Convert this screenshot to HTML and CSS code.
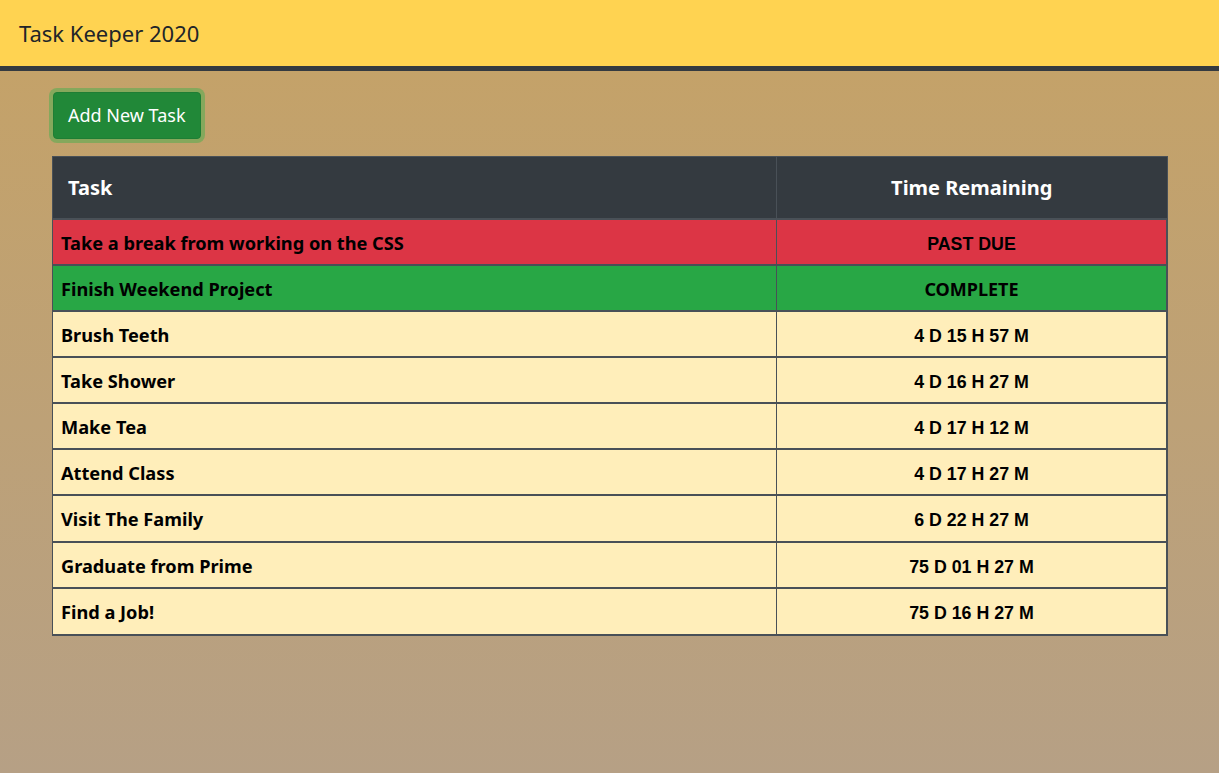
FILE: index.html
```html
<!DOCTYPE html>
<html lang="en">
<head>
<meta charset="utf-8">
<title>Task Keeper 2020</title>
<link rel="stylesheet" href="styles.css">
</head>
<body>
<header class="topbar">
  <h1 class="brand">Task Keeper 2020</h1>
</header>
<main class="content">
  <button class="btn-add" type="button">Add New Task</button>
  <table class="tasks">
    <thead>
      <tr><th class="col-task">Task</th><th class="col-time">Time Remaining</th></tr>
    </thead>
    <tbody>
      <tr class="past"><td>Take a break from working on the CSS</td><td class="time">PAST DUE</td></tr>
      <tr class="done"><td>Finish Weekend Project</td><td class="time">COMPLETE</td></tr>
      <tr><td>Brush Teeth</td><td class="time">4 D 15 H 57 M</td></tr>
      <tr><td>Take Shower</td><td class="time">4 D 16 H 27 M</td></tr>
      <tr><td>Make Tea</td><td class="time">4 D 17 H 12 M</td></tr>
      <tr><td>Attend Class</td><td class="time">4 D 17 H 27 M</td></tr>
      <tr class="tall"><td>Visit The Family</td><td class="time">6 D 22 H 27 M</td></tr>
      <tr><td>Graduate from Prime</td><td class="time">75 D 01 H 27 M</td></tr>
      <tr class="tall"><td>Find a Job!</td><td class="time">75 D 16 H 27 M</td></tr>
    </tbody>
  </table>
</main>
</body>
</html>
```

FILE: styles.css
```css
html, body {
  margin: 0;
  padding: 0;
  min-height: 100%;
}
body {
  font-family: "Noto Sans", "Open Sans", sans-serif;
  color: #212529;
  background: #b6a085;
  min-height: 773px;
}
.topbar {
  background: #ffd351;
  height: 66px;
  border-bottom: 5px solid #343a40;
  display: flex;
  align-items: center;
  padding: 0 19px;
  box-sizing: content-box;
}
.brand {
  margin: 0;
  font-weight: 400;
  font-size: 22px;
  color: #212529;
}
.content {
  background: linear-gradient(#c4a269, #b6a085);
  min-height: 702px;
  padding: 20px 51px 0 52px;
  box-sizing: border-box;
}
.btn-add {
  font-family: inherit;
  font-size: 18px;
  line-height: 27px;
  color: #fff;
  background: #218838;
  border: 1px solid #1e7e34;
  border-radius: 4px;
  padding: 9px 14px;
  margin: 1px 0 17px 1px;
  box-shadow: 0 0 0 4px #85a85c;
  cursor: pointer;
}
.tasks {
  width: 1116px;
  border-collapse: collapse;
  table-layout: fixed;
}
.tasks th {
  background: #343a40;
  color: #fff;
  font-size: 20px;
  font-weight: 700;
  height: 62px;
  padding: 0 15px;
  border: 1px solid #495057;
  box-sizing: border-box;
}
.tasks .col-task {
  width: 724px;
  text-align: left;
}
.tasks .col-time {
  text-align: center;
}
.tasks td {
  background: #ffeeba;
  color: #000;
  font-size: 18.2px;
  font-weight: 700;
  line-height: 24px;
  height: 42px;
  padding: 2px 8px 0;
  border-top: 2px solid #495057;
  border-bottom: 2px solid #495057;
  border-left: 1px solid #495057;
  border-right: 1px solid #495057;
}
.tasks td.time {
  font-family: "Liberation Sans", Arial, sans-serif;
  font-size: 17.8px;
  text-align: center;
  height: 40px;
  padding-top: 4px;
  border-right: 2px solid #495057;
}
.tasks tr.tall td {
  height: 43px;
}
.tasks tr.tall td.time {
  height: 41px;
}
.tasks tr.past td {
  background: #dc3545;
}
.tasks tr.done td {
  background: #28a745;
}
.tasks tr.done td.time {
  font-family: "Noto Sans", "Open Sans", sans-serif;
  font-size: 18px;
  height: 42px;
  padding-top: 2px;
}
```
